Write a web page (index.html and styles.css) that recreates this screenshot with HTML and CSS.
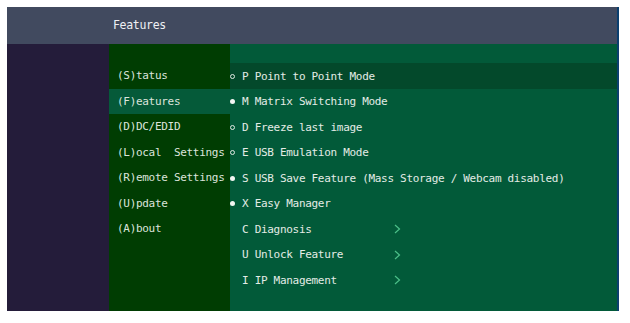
FILE: index.html
```html
<!DOCTYPE html>
<html>
<head>
<meta charset="utf-8">
<link rel="stylesheet" href="styles.css">
</head>
<body>
<div class="frame">
  <div class="header">Features</div>
  <div class="body">
    <div class="side"></div>
    <div class="menu">
      <div class="mrow">(S)tatus</div>
      <div class="mrow active">(F)eatures</div>
      <div class="mrow">(D)DC/EDID</div>
      <div class="mrow">(L)ocal&nbsp;&nbsp;Settings</div>
      <div class="mrow">(R)emote Settings</div>
      <div class="mrow">(U)pdate</div>
      <div class="mrow">(A)bout</div>
    </div>
    <div class="panel">
      <div class="prow selected"><span class="bullet ring"></span><span class="label">P Point to Point Mode</span></div>
      <div class="prow"><span class="bullet dot"></span><span class="label">M Matrix Switching Mode</span></div>
      <div class="prow"><span class="bullet ring"></span><span class="label">D Freeze last image</span></div>
      <div class="prow"><span class="bullet ring"></span><span class="label">E USB Emulation Mode</span></div>
      <div class="prow"><span class="bullet dot"></span><span class="label">S USB Save Feature (Mass Storage / Webcam disabled)</span></div>
      <div class="prow"><span class="bullet dot"></span><span class="label">X Easy Manager</span></div>
      <div class="prow"><span class="bullet"></span><span class="label sub">C Diagnosis</span><svg class="chev" width="7" height="10" viewBox="0 0 7 10"><polyline points="1,1 5.5,5 1,9" fill="none" stroke="#4cbf88" stroke-width="1.2"/></svg></div>
      <div class="prow"><span class="bullet"></span><span class="label sub">U Unlock Feature</span><svg class="chev" width="7" height="10" viewBox="0 0 7 10"><polyline points="1,1 5.5,5 1,9" fill="none" stroke="#4cbf88" stroke-width="1.2"/></svg></div>
      <div class="prow"><span class="bullet"></span><span class="label sub">I IP Management</span><svg class="chev" width="7" height="10" viewBox="0 0 7 10"><polyline points="1,1 5.5,5 1,9" fill="none" stroke="#4cbf88" stroke-width="1.2"/></svg></div>
    </div>
  </div>
</div>
</body>
</html>
```
FILE: styles.css
```css
html, body {
  margin: 0;
  padding: 0;
  background: #ffffff;
}
body {
  padding: 7px 0 0 7px;
  font-family: "DejaVu Sans Mono", "Liberation Mono", monospace;
  font-size: 11px;
  letter-spacing: -0.3px;
  color: #e4ece6;
}
.frame {
  width: 610px;
  height: 304px;
  display: grid;
  grid-template-rows: 37px 1fr;
  border-right: 2px solid #0b3f6e;
}
.header {
  background: #414a5f;
  color: #eef0f4;
  padding-left: 106px;
  line-height: 37px;
  font-size: 11.5px;
}
.body {
  display: grid;
  grid-template-columns: 102px 121px 1fr;
}
.side {
  background: #241c3a;
}
.menu {
  background: #003d02;
  padding-top: 19px;
}
.mrow {
  height: 25.5px;
  line-height: 25.5px;
  padding-left: 8px;
  white-space: pre;
  color: #dce4dc;
}
.mrow::before {
  content: "";
  display: inline-block;
  height: 0;
  vertical-align: -1px;
}
.mrow.active {
  background: #055a39;
}
.panel {
  background: #025a39;
  padding-top: 19px;
}
.prow {
  height: 25.5px;
  display: flex;
  align-items: center;
  white-space: pre;
  padding-top: 1px;
  box-sizing: border-box;
}
.prow.selected {
  background: #03492b;
}
.bullet {
  width: 12px;
  flex: none;
  display: flex;
  align-items: center;
}
.bullet.ring::before,
.bullet.dot::before {
  content: "";
  width: 5px;
  height: 5px;
  border-radius: 50%;
  box-sizing: border-box;
}
.bullet.ring::before {
  border: 1.2px solid #dfe8e2;
}
.bullet.dot::before {
  background: #f2f6f3;
}
.label.sub {
  width: 152px;
  flex: none;
}
.chev {
  display: block;
}
```
